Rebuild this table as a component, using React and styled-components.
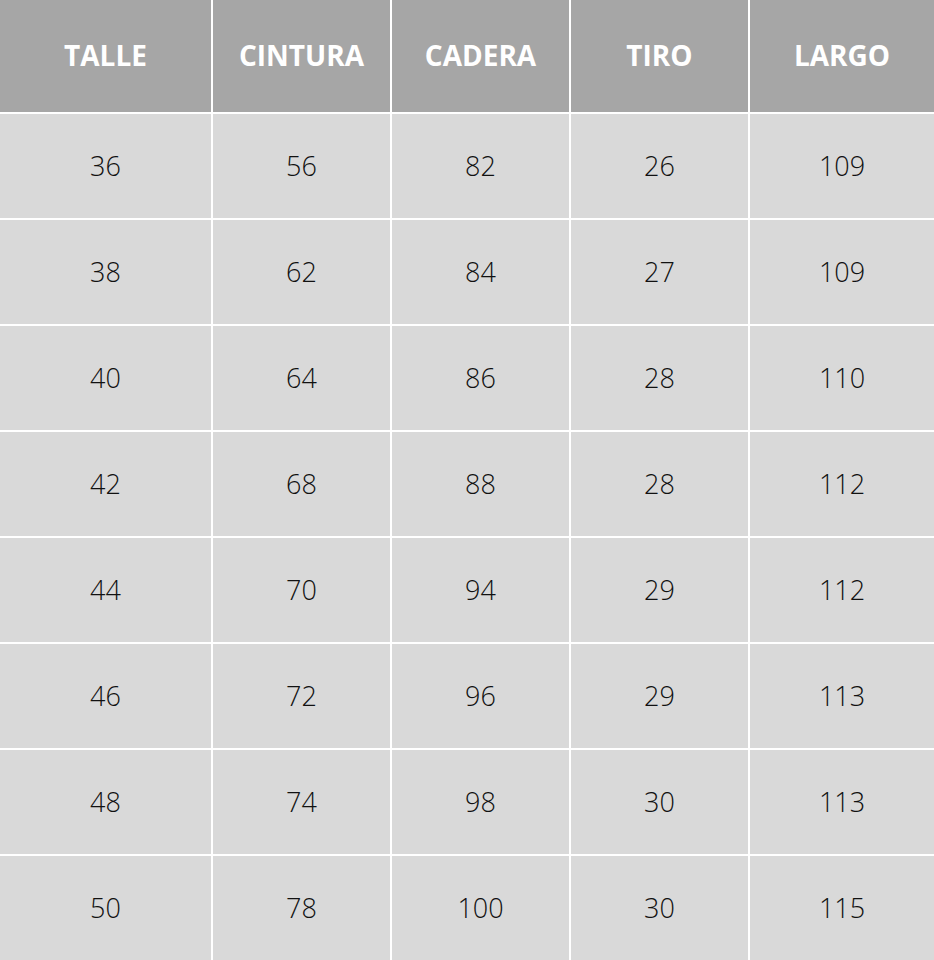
import styled, { createGlobalStyle } from "styled-components";

const GlobalStyle = createGlobalStyle`
  html, body {
    margin: 0;
    padding: 0;
    background: #ffffff;
  }
`;

const HEADERS = ["TALLE", "CINTURA", "CADERA", "TIRO", "LARGO"];

const ROWS = [
  [36, 56, 82, 26, 109],
  [38, 62, 84, 27, 109],
  [40, 64, 86, 28, 110],
  [42, 68, 88, 28, 112],
  [44, 70, 94, 29, 112],
  [46, 72, 96, 29, 113],
  [48, 74, 98, 30, 113],
  [50, 78, 100, 30, 115],
];

export default function App() {
  return (
    <>
      <GlobalStyle />
      <Table>
        {HEADERS.map((h) => (
          <HeadCell key={h}>{h}</HeadCell>
        ))}
        {ROWS.map((row, i) =>
          row.map((val, j) => <Cell key={`${i}-${j}`}>{val}</Cell>)
        )}
      </Table>
    </>
  );
}

const Table = styled.div`
  width: 934px;
  display: grid;
  grid-template-columns: 211px 177px 177px 177px 1fr;
  grid-template-rows: 112px repeat(8, 104px);
  gap: 2px;
  background: #ffffff;
  font-family: "Open Sans", "Liberation Sans", sans-serif;
`;

const HeadCell = styled.div`
  display: flex;
  align-items: center;
  justify-content: center;
  padding-bottom: 2px;
  background: #a6a6a6;
  color: #ffffff;
  font-weight: 700;
  font-size: 28px;
`;

const Cell = styled.div`
  display: flex;
  align-items: center;
  justify-content: center;
  padding-bottom: 2px;
  background: #d9d9d9;
  color: #111111;
  font-weight: 300;
  font-size: 27px;
`;
